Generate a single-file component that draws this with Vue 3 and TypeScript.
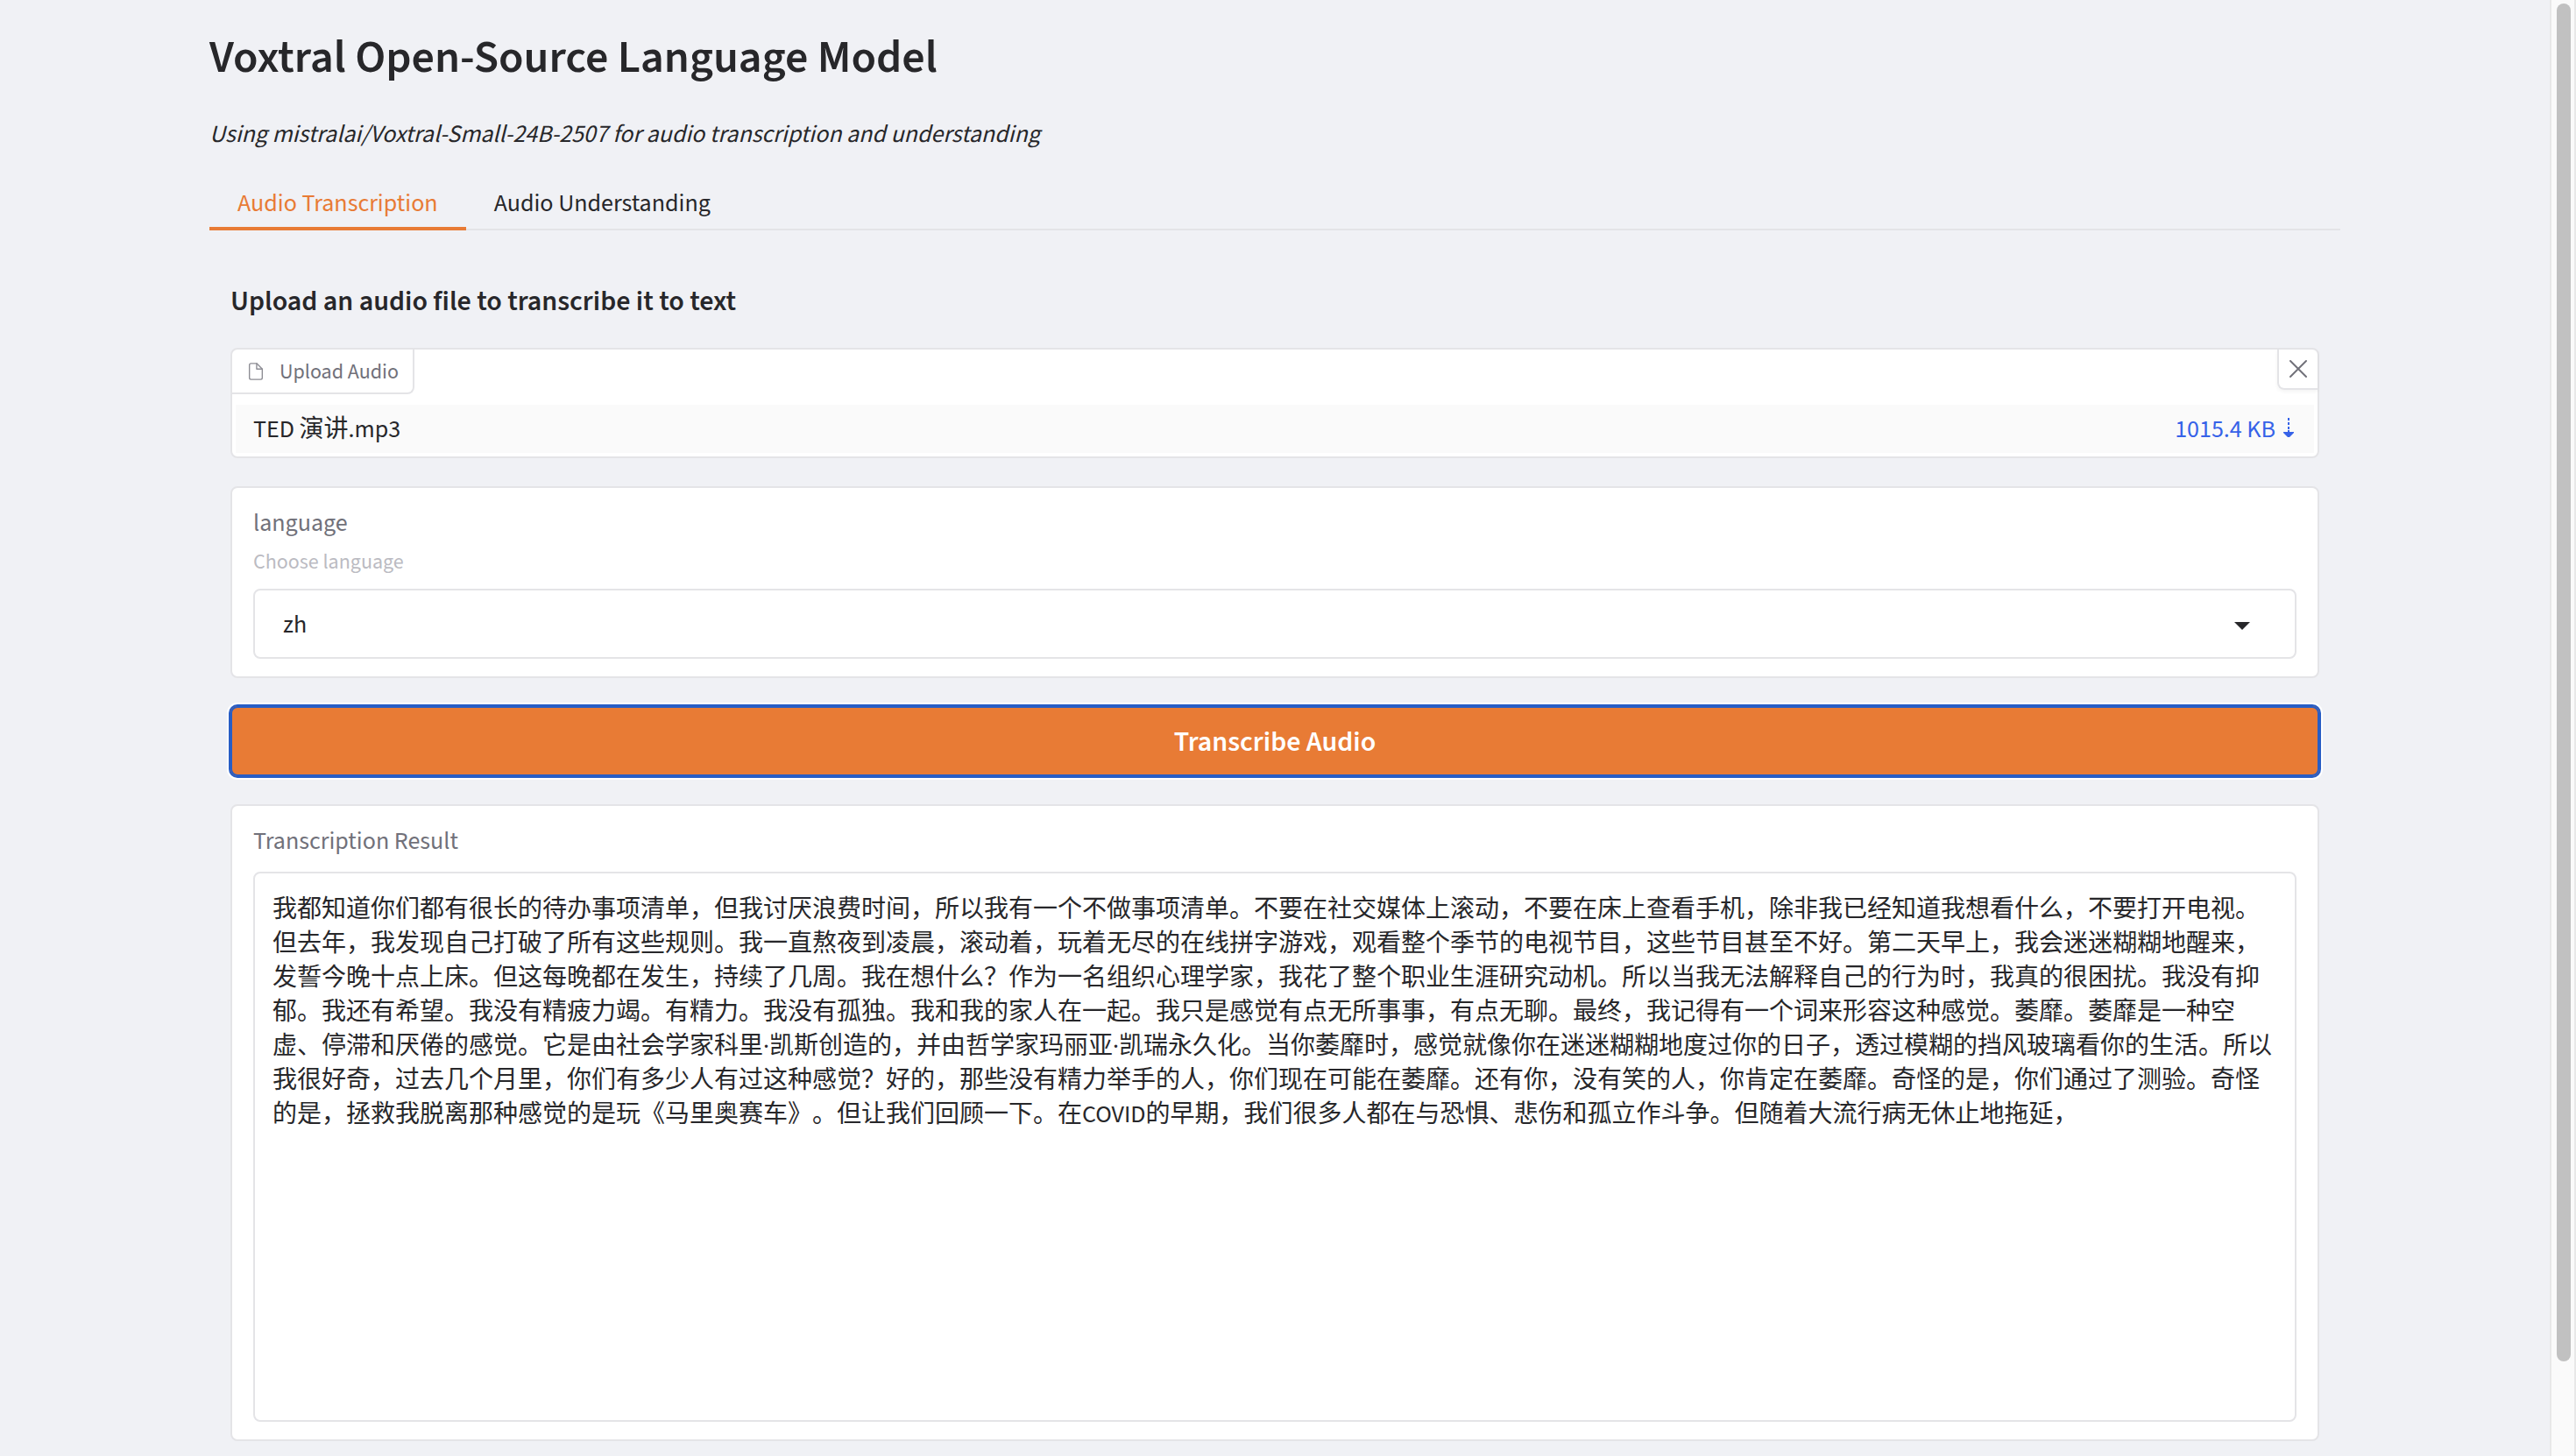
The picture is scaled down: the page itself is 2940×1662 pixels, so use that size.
<script setup lang="ts">
import { ref } from 'vue'

interface Tab {
  id: string
  label: string
}

const tabs: Tab[] = [
  { id: 'transcription', label: 'Audio Transcription' },
  { id: 'understanding', label: 'Audio Understanding' },
]
const activeTab = ref('transcription')

const file = ref<{ name: string; size: string } | null>({ name: 'TED 演讲.mp3', size: '1015.4 KB' })

const languages = ['zh', 'en', 'fr', 'de', 'es']
const language = ref('zh')

const transcription = ref(
  '我都知道你们都有很长的待办事项清单，但我讨厌浪费时间，所以我有一个不做事项清单。不要在社交媒体上滚动，不要在床上查看手机，除非我已经知道我想看什么，不要打开电视。' +
    '但去年，我发现自己打破了所有这些规则。我一直熬夜到凌晨，滚动着，玩着无尽的在线拼字游戏，观看整个季节的电视节目，这些节目甚至不好。第二天早上，我会迷迷糊糊地醒来，' +
    '发誓今晚十点上床。但这每晚都在发生，持续了几周。我在想什么？作为一名组织心理学家，我花了整个职业生涯研究动机。所以当我无法解释自己的行为时，我真的很困扰。我没有抑' +
    '郁。我还有希望。我没有精疲力竭。有精力。我没有孤独。我和我的家人在一起。我只是感觉有点无所事事，有点无聊。最终，我记得有一个词来形容这种感觉。萎靡。萎靡是一种空' +
    '虚、停滞和厌倦的感觉。它是由社会学家科里·凯斯创造的，并由哲学家玛丽亚·凯瑞永久化。当你萎靡时，感觉就像你在迷迷糊糊地度过你的日子，透过模糊的挡风玻璃看你的生活。所以' +
    '我很好奇，过去几个月里，你们有多少人有过这种感觉？好的，那些没有精力举手的人，你们现在可能在萎靡。还有你，没有笑的人，你肯定在萎靡。奇怪的是，你们通过了测验。奇怪' +
    '的是，拯救我脱离那种感觉的是玩《马里奥赛车》。但让我们回顾一下。在COVID的早期，我们很多人都在与恐惧、悲伤和孤立作斗争。但随着大流行病无休止地拖延，',
)
</script>

<template>
  <div class="page">
    <main class="container" lang="zh-CN">
      <h1>Voxtral Open-Source Language Model</h1>
      <p class="intro"><em>Using mistralai/Voxtral-Small-24B-2507 for audio transcription and understanding</em></p>

      <div class="tabs" role="tablist">
        <button
          v-for="tab in tabs"
          :key="tab.id"
          type="button"
          role="tab"
          class="tab"
          :class="{ active: tab.id === activeTab }"
          :aria-selected="tab.id === activeTab"
          @click="activeTab = tab.id"
        >
          {{ tab.label }}
        </button>
      </div>

      <section class="panel">
        <h3>Upload an audio file to transcribe it to text</h3>

        <div class="block file-block">
          <div class="file-head">
            <div class="file-label">
              <svg width="22" height="22" viewBox="0 0 24 24" fill="none" stroke="currentColor" stroke-width="1.5" stroke-linecap="round" stroke-linejoin="round" aria-hidden="true">
                <path d="M13 2H6a2 2 0 0 0-2 2v16a2 2 0 0 0 2 2h12a2 2 0 0 0 2-2V9z" />
                <polyline points="13 2 13 9 20 9" />
              </svg>
              <span>Upload Audio</span>
            </div>
            <button type="button" class="clear" aria-label="Clear" @click="file = null">
              <svg width="22" height="22" viewBox="0 0 22 22" fill="none" stroke="currentColor" stroke-width="2" stroke-linecap="round" aria-hidden="true">
                <path d="M2 2L20 20M20 2L2 20" />
              </svg>
            </button>
          </div>
          <div v-if="file" class="file-row">
            <span>{{ file.name }}</span>
            <a href="#" class="download">
              {{ file.size }}
              <svg width="12" height="25" viewBox="0 0 12 25" fill="currentColor" aria-hidden="true">
                <path d="M5 0h2v3H5zM5 5h2v3H5zM5 10h2v3H5zM5 14h2v2h5v1L7 22H5L0 17v-1h5z" />
              </svg>
            </a>
          </div>
        </div>

        <div class="block field">
          <label for="language">language</label>
          <p id="language-info" class="info">Choose language</p>
          <div class="select-wrap">
            <select id="language" v-model="language" aria-describedby="language-info">
              <option v-for="code in languages" :key="code" :value="code">{{ code }}</option>
            </select>
            <svg class="caret" width="18" height="10" viewBox="0 0 18 10" fill="currentColor" aria-hidden="true">
              <path d="M0 0H18L9 9Z" />
            </svg>
          </div>
        </div>

        <button type="button" class="primary">Transcribe Audio</button>

        <div class="block field">
          <label for="result">Transcription Result</label>
          <textarea id="result" v-model="transcription" rows="15" spellcheck="false"></textarea>
        </div>
      </section>
    </main>

    <div class="scrollbar" aria-hidden="true">
      <div class="thumb"></div>
    </div>
  </div>
</template>

<style>
body {
  margin: 0;
  background: #f0f1f5;
}
</style>

<style scoped>
.page {
  display: flex;
  height: 100vh;
  overflow: hidden;
  background: #f0f1f5;
  color: #27272a;
  font: 28px/42px 'Source Sans 3', 'Source Sans Pro', 'Noto Sans CJK SC', sans-serif;
}

button,
select,
textarea {
  margin: 0;
  border: 0;
  border-radius: 0;
  background: none;
  color: inherit;
  font: inherit;
  box-sizing: border-box;
}

.container {
  flex: 1;
  min-width: 0;
  max-width: 2432px;
  margin: 0 auto;
  padding: 32px 64px 64px;
}

h1 {
  margin: 0 0 30px;
  font-size: 52px;
  line-height: 68px;
  font-weight: 600;
}

.intro {
  margin: 0 0 27px;
  font-family: 'Noto Sans CJK SC', sans-serif;
  font-size: 25px;
}

.tabs {
  display: flex;
  box-shadow: inset 0 -2px #e4e4e7;
}

.tab {
  padding: 2px 32px 0;
  line-height: 62px;
}

.tab.active {
  color: #e87b35;
  box-shadow: inset 0 -4px #e87b35;
}

.panel {
  display: flex;
  flex-direction: column;
  gap: 32px;
  padding: 57px 24px 0;
}

h3 {
  margin: 0 0 -3px;
  font-size: 32px;
  line-height: 48px;
  font-weight: 600;
}

.block {
  border: 2px solid #e4e4e7;
  border-radius: 8px;
  background: #fff;
}

.file-head {
  display: flex;
  justify-content: space-between;
  align-items: flex-start;
  margin-bottom: 12px;
}

.file-label {
  display: flex;
  align-items: center;
  gap: 16px;
  height: 49px;
  padding: 0 16px;
  border: solid #e4e4e7;
  border-width: 0 2px 2px 0;
  border-radius: 0 0 8px 0;
  color: #71717a;
  font-size: 24px;
}

.file-label svg {
  opacity: 0.8;
}

.file-label span {
  padding-top: 2px;
}

.clear {
  display: flex;
  align-items: center;
  justify-content: center;
  width: 46px;
  height: 46px;
  border: solid #e4e4e7;
  border-width: 0 0 2px 2px;
  border-radius: 0 0 0 8px;
  box-shadow: 0 2px 4px rgba(0, 0, 0, 0.05);
  color: #71717a;
  padding: 0;
}

.file-row {
  display: flex;
  justify-content: space-between;
  align-items: center;
  height: 55px;
  margin: 0 4px 4px;
  padding: 0 23px 0 20px;
  background: #fafafa;
}

.download {
  display: flex;
  align-items: center;
  gap: 9px;
  color: #3662e8;
  text-decoration: none;
}

.field {
  display: flex;
  flex-direction: column;
  padding: 19px 24px 20px;
}

.field label {
  color: #71717a;
}

.info {
  margin: 6px 0 0;
  color: #bbbbc2;
  font-size: 24px;
  line-height: 36px;
}

.select-wrap {
  position: relative;
  display: flex;
  margin-top: 12px;
}

select {
  flex: 1;
  height: 80px;
  padding: 2px 80px 0 32px;
  border: 2px solid #e4e4e7;
  border-radius: 8px;
  background: #fff;
  appearance: none;
}

.caret {
  position: absolute;
  right: 53px;
  top: 50%;
  margin-top: -2px;
  pointer-events: none;
}

.primary {
  height: 80px;
  padding: 2px 32px 0;
  border-radius: 8px;
  background: #e87b35;
  box-shadow:
    inset 0 0 0 2px #275dc5,
    0 0 0 2px #275dc5,
    0 0 0 4px #fff;
  color: #fff;
  font-size: 32px;
  font-weight: 600;
}

textarea {
  display: block;
  width: 100%;
  margin-top: 14px;
  padding: 22px 20px 17px;
  border: 2px solid #e4e4e7;
  border-radius: 8px;
  line-height: 39px;
  text-spacing-trim: space-all;
  resize: none;
  overflow: hidden;
}

.scrollbar {
  flex: none;
  display: flex;
  box-sizing: border-box;
  width: 30px;
  padding: 4px 4px 4px 6px;
  border: solid #e8e8e8;
  border-width: 0 2px;
  background: #fafafa;
}

.thumb {
  width: 16px;
  height: 93.7%;
  border-radius: 8px;
  background: #c1c1c1;
}
</style>
